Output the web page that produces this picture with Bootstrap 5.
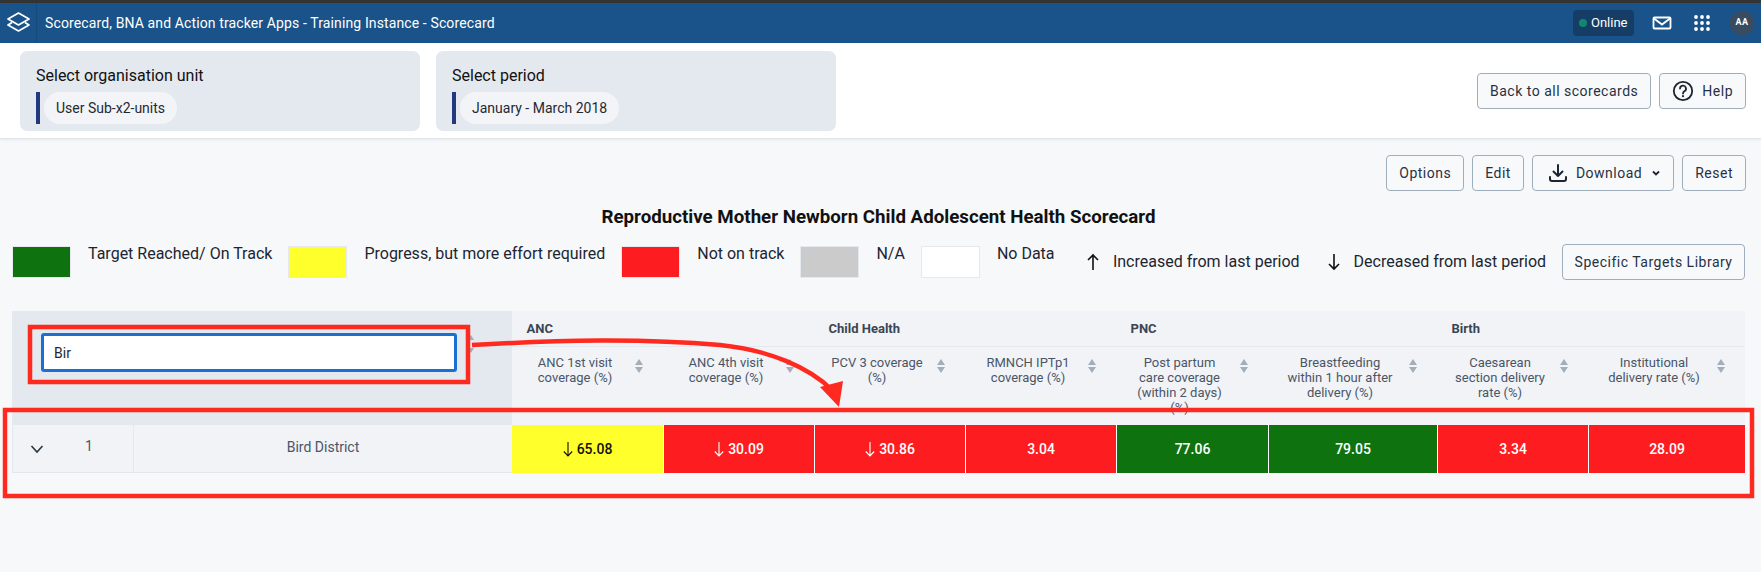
<!DOCTYPE html>
<html lang="en">
<head>
  <meta charset="UTF-8">
  <meta name="viewport" content="width=device-width, initial-scale=1.0">
  <title>Scorecard</title>
  <link href="https://cdn.jsdelivr.net/npm/bootstrap@5.3.3/dist/css/bootstrap.min.css" rel="stylesheet">
  <style>
    body {
      font-family: Roboto, "Liberation Sans", sans-serif;
      background: #f7f8fa;
      color: #1f2933;
      min-height: 572px;
      position: relative;
      overflow: hidden;
    }

    /* top bar */
    .app-bar {
      height: 43px;
      border-top: 3px solid #333;
      background: #1a5389;
      color: #fff;
      padding: 0 7px 0 0;
      flex-wrap: nowrap;
    }
    .app-logo {
      width: 37px;
      height: 40px;
      border-right: 1px solid #174a7a;
      padding-bottom: 2px;
    }
    .app-title { font-size: 14px; letter-spacing: .12px; margin-left: 8px; }
    .online-chip {
      height: 26px;
      width: 61px;
      background: #153d66;
      border-radius: 4px;
      font-size: 13px;
      padding-left: 6px;
      gap: 4px;
    }
    .online-dot { width: 8px; height: 8px; border-radius: 50%; background: #12876f; }
    .bar-mail { margin-left: 18px; }
    .bar-apps { margin-left: 22px; }
    .app-avatar {
      width: 24px;
      height: 24px;
      margin-left: 20px;
      border-radius: 50%;
      background: #3a4a5f;
      font-size: 9px;
      font-weight: 700;
      letter-spacing: .5px;
    }

    /* filter strip */
    .filter-strip {
      height: 96px;
      background: #fff;
      border-bottom: 1px solid #e1e4e9;
      box-shadow: 0 1px 3px rgba(30, 40, 60, .08);
      padding: 8px 15px 8px 20px;
    }
    .filter-card {
      width: 400px;
      height: 80px;
      background: #e4e8ef;
      border-radius: 7px;
      padding: 16px 16px 0;
    }
    .filter-label { font-size: 16px; line-height: 18px; color: #111; }
    .filter-value { margin-top: 7px; height: 32px; border-left: 4px solid #22387f; padding-left: 4px; }
    .filter-chip {
      background: #f3f4f8;
      border-radius: 16px;
      padding: 0 12px;
      font-size: 14px;
      line-height: 32px;
    }

    .tool-btn {
      height: 36px;
      background: #f8f9fb;
      border: 1px solid #a0adba;
      border-radius: 4px;
      color: #273142;
      font-size: 14px;
      letter-spacing: .5px;
      padding: 0 12px;
    }
    .tool-btn:hover { background: #eef0f4; }
    .dl-btn { padding-left: 15px; }
    .dl-chevron { margin-left: 9px; }
    .strip-btn { margin-top: 1px; }

    .tool-row { padding: 16px 15px 0 0; }
    .score-heading {
      font-size: 18.72px;
      font-weight: 700;
      line-height: 24px;
      margin: 14px 0 15px;
      padding-right: 4px;
      color: #111;
    }

    /* legend */
    .legend-row { height: 36px; padding: 0 16px 0 12px; }
    .legend-swatch {
      width: 59px;
      height: 32px;
      border: 1px solid #e4e8ef;
      margin-right: 17px;
      flex-shrink: 0;
    }
    .legend-text { font-size: 16px; line-height: 16px; margin-right: 16px; height: 32px; color: #1c2530; }
    .legend-trend { font-size: 16px; margin-right: 28px; gap: 14px; color: #1c2530; }
    .legend-trend.last-trend { margin-right: 16px; }
    .lib-btn { padding: 0 11.5px; }

    .sw-green { background: #0e730e; }
    .sw-yellow { background: #ffff2b; }
    .sw-red { background: #fd1d20; }
    .sw-grey { background: #cbcbcb; }
    .sw-white { background: #fff; }

    /* scorecard table */
    .grid-wrap { margin: 31px 16px 0 12px; }
    .score-grid {
      table-layout: fixed;
      width: 1733px;
      margin: 0;
      border-collapse: separate;
      border-spacing: 0;
    }
    .score-grid > :not(caption) > * > * {
      padding: 0;
      border: 0;
      box-shadow: none;
    }
    .score-grid thead th { background: #f1f3f7; color: #4a5668; font-weight: 400; }
    .score-grid thead .group-row { height: 36px; }
    .score-grid thead .label-row { height: 78px; }
    .score-grid thead .group-row th {
      font-size: 13px;
      font-weight: 700;
      color: #3a4554;
      padding: 1px 0 0 14.5px;
      vertical-align: middle;
      border-bottom: 1px solid #e4e8ef;
    }
    .score-grid thead .group-row th.search-cell {
      background: #e4e8ef;
      padding: 22px 0 0 29px;
      vertical-align: top;
      border: 0;
    }
    .search-input {
      width: 416px;
      height: 39px;
      border: 3px solid #1b6fd0;
      border-radius: 3px;
      font-size: 14px;
      color: #1f2933;
      padding: 0 10px;
      box-shadow: none;
    }
    .search-input:focus { border-color: #1b6fd0; box-shadow: none; }
    .label-cell { padding: 8px 20px 0 15.5px; font-size: 13px; line-height: 15px; }
    .sort-icon { width: 8px; height: 16px; margin: 3px 0 0 12.5px; flex-shrink: 0; }
    .col-toggle { width: 122px; }
    .col-name { width: 378px; }
    .col-m151 { width: 151px; }
    .col-m152 { width: 152px; }
    .col-m157 { width: 157px; }
    .col-m169 { width: 169px; }

    .score-grid tbody tr { height: 48px; }
    .score-grid tbody td {
      vertical-align: middle;
      text-align: center;
      font-size: 14px;
    }
    .score-grid tbody td.row-cell {
      background: #f1f3f7;
      color: #4a5668;
      font-size: 14px;
      border-bottom: 1px solid #e2e5ea;
    }
    .score-grid tbody td.row-name { padding-bottom: 3px; }
    .score-grid tbody td.row-toggle { border-right: 1px solid #e6e8ed; border-left: 1px solid #e6e8ed; }
    .toggle-inner { padding: 0 0 4px 17px; }
    .row-num { margin-left: 41px; font-size: 14px; }
    .score-grid tbody td.val-cell { font-weight: 500; border-left: 1px solid #fff; color: #fff; }
    .score-grid tbody td.val-cell.first-val { border-left: 0; }
    .score-grid tbody td.val-red { background: #fd1d20; }
    .score-grid tbody td.val-green { background: #0e730e; }
    .score-grid tbody td.val-yellow { background: #ffff2b; color: #111; }
    .val-arrow { width: 10px; height: 16px; margin-right: 4px; vertical-align: -3px; }

    .mark-layer { position: absolute; top: 0; left: 0; pointer-events: none; }
  </style>
</head>
<body>
  <!-- top bar -->
  <nav class="navbar app-bar d-flex align-items-center">
    <div class="d-flex align-items-center">
      <div class="app-logo d-flex align-items-center justify-content-center">
        <svg width="23" height="20" viewBox="0 0 23 20" fill="none" stroke="#fff" stroke-width="1.7" stroke-linejoin="round">
          <path d="M11.5 1 L22 7 L11.5 13 L1 7 Z"/>
          <path d="M5 10.5 L1 13 L11.5 19 L22 13 L18 10.5"/>
        </svg>
      </div>
      <span class="app-title">Scorecard, BNA and Action tracker Apps - Training Instance - Scorecard</span>
    </div>
    <div class="d-flex align-items-center">
      <div class="online-chip d-flex align-items-center"><span class="online-dot"></span>Online</div>
      <svg class="bar-mail" width="20" height="14" viewBox="0 0 20 14" fill="none" stroke="#fff" stroke-width="1.8">
        <rect x="1.5" y="1.5" width="17" height="11" rx="1"/>
        <path d="M2 2.5 L10 8.5 L18 2.5"/>
      </svg>
      <svg class="bar-apps" width="16" height="16" viewBox="0 0 16 16" fill="#fff">
        <circle cx="2" cy="2" r="1.9"/><circle cx="8" cy="2" r="1.9"/><circle cx="14" cy="2" r="1.9"/>
        <circle cx="2" cy="8" r="1.9"/><circle cx="8" cy="8" r="1.9"/><circle cx="14" cy="8" r="1.9"/>
        <circle cx="2" cy="14" r="1.9"/><circle cx="8" cy="14" r="1.9"/><circle cx="14" cy="14" r="1.9"/>
      </svg>
      <div class="app-avatar d-flex align-items-center justify-content-center">AA</div>
    </div>
  </nav>

  <!-- org unit / period -->
  <section class="filter-strip d-flex align-items-center justify-content-between">
    <div class="d-flex gap-3">
      <div class="filter-card">
        <div class="filter-label">Select organisation unit</div>
        <div class="filter-value d-flex"><span class="filter-chip">User Sub-x2-units</span></div>
      </div>
      <div class="filter-card">
        <div class="filter-label">Select period</div>
        <div class="filter-value d-flex"><span class="filter-chip">January - March 2018</span></div>
      </div>
    </div>
    <div class="d-flex gap-2 strip-btn">
      <button class="btn tool-btn">Back to all scorecards</button>
      <button class="btn tool-btn d-flex align-items-center gap-2">
        <svg width="22" height="22" viewBox="0 0 22 22" fill="none" stroke="#1c2530" stroke-width="1.8">
          <circle cx="11" cy="11" r="9.2"/>
          <path d="M8 8.6 A3 3 0 1 1 12.4 11.3 C11.4 11.9 11 12.4 11 13.6" stroke-linecap="round"/>
          <circle cx="11" cy="16.2" r="1.1" fill="#1c2530" stroke="none"/>
        </svg>
        Help
      </button>
    </div>
  </section>

  <!-- actions -->
  <div class="tool-row d-flex justify-content-end gap-2">
    <button class="btn tool-btn">Options</button>
    <button class="btn tool-btn">Edit</button>
    <button class="btn tool-btn dl-btn d-flex align-items-center">
      <svg class="me-2" width="20" height="20" viewBox="0 0 20 20" fill="none" stroke="#1c2530" stroke-width="2" stroke-linecap="round" stroke-linejoin="round">
        <path d="M10 2 V13 M5.5 8.5 L10 13 L14.5 8.5"/>
        <path d="M2 14 V16 A2 2 0 0 0 4 18 H16 A2 2 0 0 0 18 16 V14"/>
      </svg>
      Download
      <svg class="dl-chevron" width="10" height="10" viewBox="0 0 10 10" fill="none" stroke="#1c2530" stroke-width="1.8">
        <path d="M2 3.5 L5 6.5 L8 3.5"/>
      </svg>
    </button>
    <button class="btn tool-btn">Reset</button>
  </div>

  <h1 class="score-heading text-center">Reproductive Mother Newborn Child Adolescent Health Scorecard</h1>

  <!-- legend -->
  <div class="legend-row d-flex align-items-center">
    <span class="legend-swatch sw-green"></span><span class="legend-text">Target Reached/ On Track</span>
    <span class="legend-swatch sw-yellow"></span><span class="legend-text">Progress, but more effort required</span>
    <span class="legend-swatch sw-red"></span><span class="legend-text">Not on track</span>
    <span class="legend-swatch sw-grey"></span><span class="legend-text">N/A</span>
    <span class="legend-swatch sw-white"></span><span class="legend-text">No Data</span>
    <span class="legend-trend d-flex align-items-center ms-auto">
      <svg width="12" height="18" viewBox="0 0 12 18" fill="none" stroke="#111" stroke-width="1.6"><path d="M6 17 V2 M1 7 L6 2 L11 7"/></svg>
      Increased from last period
    </span>
    <span class="legend-trend last-trend d-flex align-items-center">
      <svg width="12" height="18" viewBox="0 0 12 18" fill="none" stroke="#111" stroke-width="1.6"><path d="M6 1 V16 M1 11 L6 16 L11 11"/></svg>
      Decreased from last period
    </span>
    <button class="btn tool-btn lib-btn">Specific Targets Library</button>
  </div>

  <!-- scorecard -->
  <div class="grid-wrap">
    <table class="table score-grid">
      <colgroup>
        <col class="col-toggle"><col class="col-name">
        <col class="col-m151"><col class="col-m151"><col class="col-m151"><col class="col-m151">
        <col class="col-m152"><col class="col-m169"><col class="col-m151"><col class="col-m157">
      </colgroup>
      <thead>
        <tr class="group-row">
          <th class="search-cell" colspan="2" rowspan="2">
            <input class="form-control search-input" type="text" value="Bir">
          </th>
          <th colspan="2">ANC</th>
          <th colspan="2">Child Health</th>
          <th colspan="2">PNC</th>
          <th colspan="2">Birth</th>
        </tr>
        <tr class="label-row" id="labelRow"></tr>
      </thead>
      <tbody>
        <tr id="dataRow">
          <td class="row-cell row-toggle text-start">
            <div class="toggle-inner d-flex align-items-start">
              <svg class="mt-2" width="14" height="10" viewBox="0 0 14 10" fill="none" stroke="#2b3442" stroke-width="1.6"><path d="M1.5 2 L7 8 L12.5 2"/></svg>
              <span class="row-num">1</span>
            </div>
          </td>
          <td class="row-cell row-name">Bird District</td>
        </tr>
      </tbody>
    </table>
  </div>

  <!-- red annotations drawn on top of the screenshot -->
  <svg class="mark-layer" width="1761" height="572" viewBox="0 0 1761 572" fill="none">
    <path d="M468 340 L471 335 L474 340 Z M468 348 L471 353 L474 348 Z" fill="#a3aebb"/>
    <rect x="30" y="327" width="438" height="55" stroke="#ff2a1f" stroke-width="4.5"/>
    <rect x="5" y="410" width="1747" height="86" stroke="#ff2a1f" stroke-width="4.5"/>
    <path d="M472 345 C 560 340, 640 338, 720 345 C 770 350, 810 368, 832 390" stroke="#ff2a1f" stroke-width="4.5"/>
    <path d="M820 387 L843 381 L839 407 Z" fill="#ff2a1f"/>
  </svg>

  <script>
    const measures = [
      { label: 'ANC 1st visit coverage (%)', value: '65.08', tone: 'yellow', down: true },
      { label: 'ANC 4th visit coverage (%)', value: '30.09', tone: 'red', down: true },
      { label: 'PCV 3 coverage (%)', value: '30.86', tone: 'red', down: true },
      { label: 'RMNCH IPTp1 coverage (%)', value: '3.04', tone: 'red' },
      { label: 'Post partum<br>care coverage (within 2 days) (%)', value: '77.06', tone: 'green' },
      { label: 'Breastfeeding within 1 hour after delivery (%)', value: '79.05', tone: 'green' },
      { label: 'Caesarean section delivery rate (%)', value: '3.34', tone: 'red' },
      { label: 'Institutional delivery rate (%)', value: '28.09', tone: 'red' }
    ];

    const sortIcon = '<svg class="sort-icon" viewBox="0 0 8 16" fill="#a3aebb"><path d="M4 1 L8 7 H0 Z M0 9 H8 L4 15 Z"/></svg>';
    const labelRow = document.getElementById('labelRow');
    const dataRow = document.getElementById('dataRow');

    measures.forEach((m, i) => {
      const th = document.createElement('th');
      th.className = 'align-top';
      th.innerHTML = '<div class="label-cell d-flex text-center"><div class="flex-grow-1">' + m.label + '</div>' + sortIcon + '</div>';
      labelRow.appendChild(th);

      const td = document.createElement('td');
      td.className = 'val-cell val-' + m.tone + (i === 0 ? ' first-val' : '');
      const stroke = m.tone === 'yellow' ? '#111' : '#fff';
      const arrow = m.down ? '<svg class="val-arrow" viewBox="0 0 10 16" fill="none" stroke="' + stroke + '" stroke-width="1.1"><path d="M5 1 V15 M.8 10.5 L5 15 L9.2 10.5"/></svg>' : '';
      td.innerHTML = arrow + m.value;
      dataRow.appendChild(td);
    });
  </script>
  <script src="https://cdn.jsdelivr.net/npm/bootstrap@5.3.3/dist/js/bootstrap.bundle.min.js"></script>
</body>
</html>
